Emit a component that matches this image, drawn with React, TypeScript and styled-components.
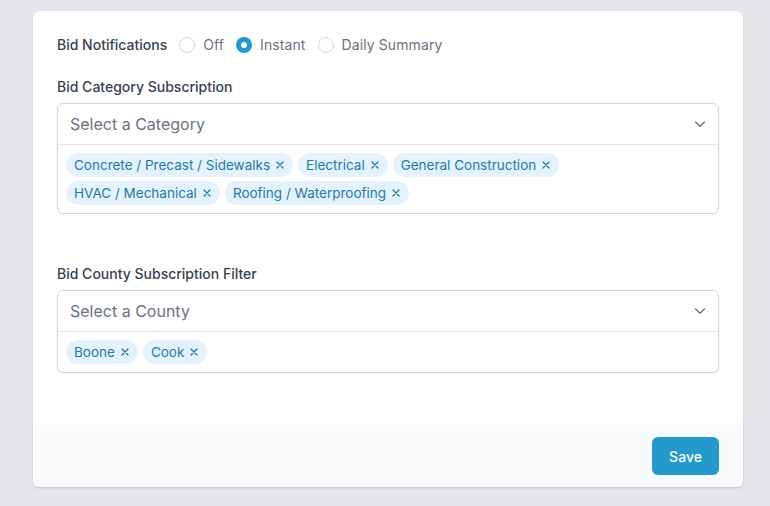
import React from "react";
import styled, { createGlobalStyle } from "styled-components";

const Global = createGlobalStyle`
  html, body { margin: 0; padding: 0; background: #e5e7eb; }
  body { font-family: Inter, "Noto Sans", sans-serif; -webkit-font-smoothing: antialiased; }
  * { box-sizing: border-box; }
`;

const Page = styled.div`
  padding: 11px 27px 19px 33px;
`;

const Card = styled.div`
  width: 710px;
  height: 476px;
  background: #ffffff;
  border-radius: 6px;
  box-shadow: 0 1px 3px rgba(0, 0, 0, 0.1), 0 1px 2px rgba(0, 0, 0, 0.06);
  display: flex;
  flex-direction: column;
  overflow: hidden;
`;

const Body = styled.div`
  flex: 1;
  padding: 24px 24px 0 24px;
  display: flex;
  flex-direction: column;
`;

const RadioRow = styled.div`
  display: flex;
  align-items: center;
  height: 20px;
  font-size: 14px;
  line-height: 20px;
`;

const RowLabel = styled.span`
  color: #374151;
  font-weight: 500;
  margin-right: 12px;
`;

const RadioOption = styled.label`
  display: flex;
  align-items: center;
  gap: 8px;
  color: #6b7280;
  margin-right: 12px;
  letter-spacing: 0.1px;
`;

const RadioCircle = styled.span<{ $checked?: boolean }>`
  width: 16px;
  height: 16px;
  border-radius: 50%;
  border: ${(p) => (p.$checked ? "none" : "1px solid #d1d5db")};
  background: ${(p) => (p.$checked ? "#2399cf" : "#ffffff")};
  display: flex;
  align-items: center;
  justify-content: center;
  &::after {
    content: "";
    display: ${(p) => (p.$checked ? "block" : "none")};
    width: 6px;
    height: 6px;
    border-radius: 50%;
    background: #ffffff;
  }
`;

const FieldLabel = styled.div<{ $top: number }>`
  margin-top: ${(p) => p.$top}px;
  font-size: 14px;
  line-height: 20px;
  font-weight: 500;
  color: #374151;
  margin-bottom: 6px;
`;

const SelectBox = styled.div`
  border: 1px solid #d1d5db;
  border-radius: 6px;
  box-shadow: 0 1px 2px rgba(0, 0, 0, 0.05);
  background: #fff;
`;

const SelectHeader = styled.div`
  height: 41px;
  display: flex;
  align-items: center;
  justify-content: space-between;
  padding: 0 12px;
  border-bottom: 1px solid #e5e7eb;
  font-size: 16px;
  color: #6b7280;
`;

const TagArea = styled.div`
  display: flex;
  flex-wrap: wrap;
  gap: 4px 5px;
  padding: 8px;
`;

const Tag = styled.span`
  display: inline-flex;
  align-items: center;
  height: 24px;
  padding: 0 9px 0 8px;
  border-radius: 12px;
  background: #e4f3fb;
  color: #1c7aab;
  font-size: 13.5px;
  line-height: 20px;
  gap: 6px;
`;

const Footer = styled.div`
  height: 62px;
  background: #f9fafb;
  display: flex;
  align-items: center;
  justify-content: flex-end;
  padding: 0 24px;
`;

const SaveButton = styled.button`
  height: 38px;
  width: 67px;
  border: none;
  border-radius: 6px;
  background: #2399cc;
  color: #ffffff;
  font-family: Inter, "Noto Sans", sans-serif;
  font-size: 14px;
  font-weight: 500;
  cursor: pointer;
`;

const Chevron = () => (
  <svg width="12" height="8" viewBox="0 0 12 8" fill="none" stroke="#6b7280" strokeWidth="1.5" strokeLinecap="round" strokeLinejoin="round">
    <path d="M1.5 2l4.5 4.2L10.5 2" />
  </svg>
);

const XIcon = () => (
  <svg width="8" height="8" viewBox="0 0 8 8" fill="none" stroke="#1c7aab" strokeWidth="1.3" strokeLinecap="round">
    <path d="M1 1l6 6M7 1L1 7" />
  </svg>
);

const MultiSelect = ({ placeholder, tags }: { placeholder: string; tags: string[] }) => (
  <SelectBox>
    <SelectHeader>
      <span>{placeholder}</span>
      <Chevron />
    </SelectHeader>
    <TagArea>
      {tags.map((t) => (
        <Tag key={t}>
          {t}
          <XIcon />
        </Tag>
      ))}
    </TagArea>
  </SelectBox>
);

export default function App() {
  return (
    <>
      <Global />
      <Page>
        <Card>
          <Body>
            <RadioRow>
              <RowLabel>Bid Notifications</RowLabel>
              <RadioOption>
                <RadioCircle />
                Off
              </RadioOption>
              <RadioOption>
                <RadioCircle $checked />
                Instant
              </RadioOption>
              <RadioOption>
                <RadioCircle />
                Daily Summary
              </RadioOption>
            </RadioRow>
            <FieldLabel $top={22}>Bid Category Subscription</FieldLabel>
            <MultiSelect
              placeholder="Select a Category"
              tags={[
                "Concrete / Precast / Sidewalks",
                "Electrical",
                "General Construction",
                "HVAC / Mechanical",
                "Roofing / Waterproofing",
              ]}
            />
            <FieldLabel $top={50}>Bid County Subscription Filter</FieldLabel>
            <MultiSelect placeholder="Select a County" tags={["Boone", "Cook"]} />
          </Body>
          <Footer>
            <SaveButton>Save</SaveButton>
          </Footer>
        </Card>
      </Page>
    </>
  );
}
